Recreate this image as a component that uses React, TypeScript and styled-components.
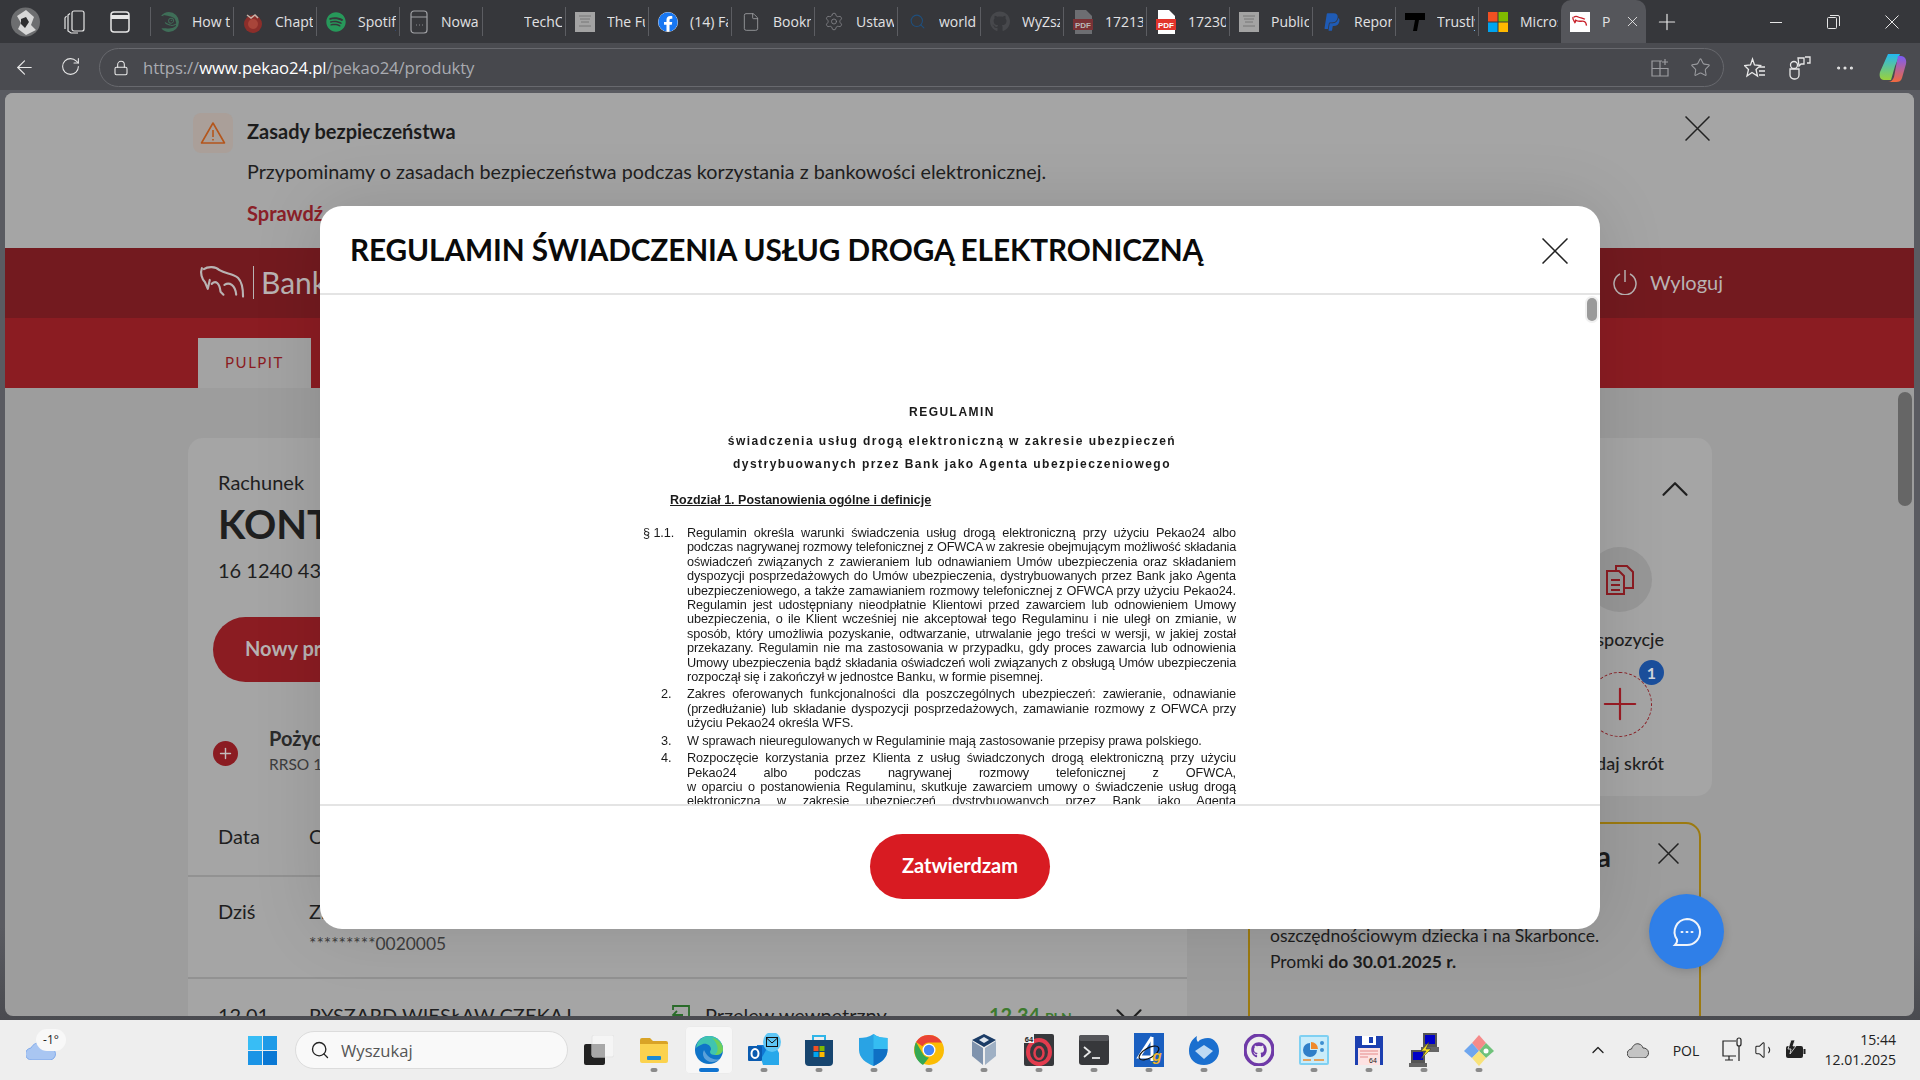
import React from 'react';
import styled, { createGlobalStyle } from 'styled-components';
import {
  ArrowLeft,
  ChevronDown,
  ChevronUp,
  File,
  Lock,
  MoreHorizontal,
  Plus,
  RotateCw,
  Search,
  Settings,
  Star,
  Volume1,
  X,
} from 'lucide-react';
import { FaFacebook, FaGithub, FaPaypal, FaSpotify } from 'react-icons/fa';
import { SiOpensuse } from 'react-icons/si';

const GlobalStyle = createGlobalStyle`
  html, body {
    margin: 0;
    padding: 0;
    width: 1920px;
    height: 1080px;
    overflow: hidden;
    background: #36373b;
    font-family: "Lato", "Liberation Sans", sans-serif;
  }
  * { box-sizing: border-box; }
`;

const Screen = styled.div`
  position: relative;
  width: 1920px;
  height: 1080px;
  display: flex;
  flex-direction: column;
  overflow: hidden;
`;

/* browser chrome */

const TabStrip = styled.div`
  height: 43px;
  flex: none;
  display: flex;
  align-items: stretch;
  background: #36373b;
`;

const StripLead = styled.div`
  flex: 0 0 150px;
  display: flex;
  align-items: center;
  padding-left: 11px;
  gap: 24px;
  color: #e6e6e6;
`;

const Tab = styled.div`
  flex: 0 0 83px;
  display: flex;
  align-items: center;
  gap: 12px;
  padding: 0 3px 0 9px;
  border-left: 1px solid #5c5d62;
  margin: 7px 0;
  overflow: hidden;
`;

const TabThumb = styled.span<{ $color: string }>`
  flex: 0 0 20px;
  width: 20px;
  height: 20px;
  display: flex;
  align-items: center;
  justify-content: center;
  color: ${p => p.$color};
`;

const TabTitle = styled.span`
  font-family: "Open Sans", sans-serif;
  font-size: 14px;
  color: #e2e2e4;
  white-space: nowrap;
  overflow: hidden;
`;

const ActiveTab = styled.div`
  flex: 0 0 85px;
  display: flex;
  align-items: center;
  gap: 12px;
  padding: 0 0 0 9px;
  background: #55565b;
  border-radius: 10px 10px 0 0;
`;

const NewTab = styled.div`
  flex: 0 0 42px;
  display: flex;
  align-items: center;
  justify-content: center;
  color: #e6e6e6;
`;

const WindowButtons = styled.div`
  margin-left: auto;
  display: flex;
  align-items: center;
  padding-right: 21px;
  gap: 45px;
  color: #e6e6e6;
`;

const Toolbar = styled.div`
  height: 47px;
  flex: none;
  display: flex;
  align-items: center;
  background: #4a4b50;
  padding: 2px 0 0 13px;
  color: #e8e8e8;
`;

const ToolButtons = styled.div`
  flex: 0 0 86px;
  display: flex;
  gap: 24px;
`;

const AddressBar = styled.div`
  width: 1625px;
  height: 39px;
  display: flex;
  align-items: center;
  border: 1px solid #68696e;
  border-radius: 20px;
  background: #47484d;
  padding: 0 12px 0 10px;
`;

const LockDisc = styled.span`
  width: 22px;
  height: 22px;
  display: flex;
  align-items: center;
  justify-content: center;
  margin-right: 11px;
  color: #e8e8e8;
`;

const Url = styled.span`
  font-family: "Open Sans", sans-serif;
  font-size: 16.7px;
  color: #a9abb1;
  letter-spacing: -0.1px;
`;

const UrlHost = styled.span`
  color: #ffffff;
`;

const AddressTools = styled.div`
  margin-left: auto;
  display: flex;
  gap: 20px;
  align-items: center;
  color: #9b9ca0;
`;

const ToolbarEnd = styled.div`
  display: flex;
  align-items: center;
  gap: 23px;
  margin-left: 20px;
  color: #e8e8e8;
`;

/* dimmed page */

const Frame = styled.div`
  flex: 1;
  min-height: 0;
  padding: 3px 6px 4px 5px;
  background: linear-gradient(#5a5b61 0, #5a5b61 90%, #4a4b50 100%);
  display: flex;
`;

const Page = styled.div`
  position: relative;
  flex: 1;
  background: #9d9d9d;
  border-radius: 8px;
  overflow: hidden;
  display: flex;
  flex-direction: column;
`;

const Banner = styled.div`
  height: 155px;
  flex: none;
  background: #a5a5a5;
  display: flex;
  padding: 20px 0 0 188px;
  gap: 14px;
`;

const AlertBadge = styled.div`
  flex: 0 0 40px;
  height: 40px;
  border-radius: 8px;
  background: #aa9f99;
  display: flex;
  align-items: center;
  justify-content: center;
`;

const BannerText = styled.div`
  display: flex;
  flex-direction: column;
  width: 1400px;
`;

const BannerTitle = styled.div`
  font-size: 20px;
  line-height: 28px;
  margin-top: 4px;
  font-weight: 700;
  color: #1c1c1c;
`;

const BannerBody = styled.div`
  font-size: 19.76px;
  line-height: 28px;
  margin-top: 12px;
  color: #1f1f1f;
`;

const BannerLink = styled.div`
  font-size: 20px;
  line-height: 28px;
  margin-top: 14px;
  font-weight: 700;
  color: #8b2028;
`;

const BannerClose = styled.div`
  position: absolute;
  left: 1680px;
  top: 23px;
  color: #222;
  display: flex;
`;

const BankHeader = styled.div`
  height: 70px;
  flex: none;
  background: #731a1f;
  display: flex;
  align-items: center;
  padding: 0 191px 2px 193px;
  color: #b9b3b3;
`;

const LogoRule = styled.span`
  width: 1px;
  height: 33px;
  background: #b9b3b3;
  margin: 0 7px 0 8px;
`;

const BankName = styled.span`
  font-size: 30px;
`;

const Logout = styled.div`
  margin-left: auto;
  display: flex;
  align-items: center;
  gap: 12px;
  font-size: 20px;
`;

const MainNav = styled.div`
  height: 70px;
  flex: none;
  background: #8b1c22;
  display: flex;
  align-items: flex-end;
  padding-left: 193px;
`;

const NavTab = styled.div`
  width: 113px;
  height: 50px;
  padding-bottom: 2px;
  background: #a3a3a3;
  color: #8b1c22;
  font-size: 15px;
  letter-spacing: 1.5px;
  display: flex;
  align-items: center;
  justify-content: center;
`;

const PageBody = styled.div`
  flex: 1;
  min-height: 0;
  display: flex;
  padding: 50px 0 0 183px;
  gap: 30px;
`;

const LeftColumn = styled.div`
  flex: 0 0 999px;
  background: #a5a5a5;
  border-radius: 15px 15px 0 0;
  color: #1f1f1f;
`;

const AccountBox = styled.div`
  padding: 30px 30px 0;
`;

const AccountKind = styled.div`
  font-size: 20px;
  line-height: 28px;
`;

const AccountName = styled.div`
  font-size: 40px;
  line-height: 48px;
  margin-top: 4px;
  font-weight: 700;
`;

const AccountNumber = styled.div`
  font-size: 20px;
  line-height: 28px;
  margin-top: 8px;
`;

const PrimaryPill = styled.div`
  width: 220px;
  height: 65px;
  margin: 33px 0 0 -5px;
  border-radius: 33px;
  background: #8b1c22;
  color: #b7b2b2;
  font-size: 20px;
  font-weight: 700;
  display: flex;
  align-items: center;
  padding: 0 0 4px 32px;
`;

const OfferRow = styled.div`
  display: flex;
  align-items: center;
  gap: 31px;
  padding-left: 25px;
  margin-top: 43px;
`;

const OfferDot = styled.span`
  width: 25px;
  height: 25px;
  border-radius: 50%;
  background: #8b1c22;
  color: #c4bcbc;
  display: flex;
  align-items: center;
  justify-content: center;
  margin-top: 6px;
`;

const OfferTitle = styled.div`
  font-size: 20px;
  line-height: 26px;
  font-weight: 700;
  color: #2b2b2b;
`;

const OfferNote = styled.div`
  font-size: 15.5px;
  line-height: 22px;
  margin-top: 2px;
  color: #3d3d3d;
`;

const HistoryRow = styled.div<{ $height: number; $top: number; $gap?: number }>`
  height: ${p => p.$height}px;
  margin-top: ${p => p.$gap ?? 0}px;
  padding: ${p => p.$top}px 0 0 30px;
  display: grid;
  grid-template-columns: 91px 360px 320px 122px 60px;
  border-bottom: 2px solid #929292;
  align-items: start;
  font-size: 20px;
  line-height: 28px;
`;

const MaskedIban = styled.div`
  font-size: 17.4px;
  line-height: 24px;
  margin-top: 7px;
  color: #3e3e3e;
`;

const Transfer = styled.div`
  display: flex;
  align-items: center;
  gap: 12px;
  font-size: 20px;
`;

const Amount = styled.div`
  color: #3d7a2e;
  font-weight: 700;
  font-size: 20px;
`;

const AmountUnit = styled.span`
  font-size: 14px;
`;

const RowToggle = styled.div`
  display: flex;
  margin: -8px 0 0 -5px;
`;

const RightColumn = styled.div`
  flex: 0 0 495px;
  display: flex;
  flex-direction: column;
  gap: 26px;
`;

const ShortcutCard = styled.div`
  height: 358px;
  flex: none;
  background: #a5a5a5;
  border-radius: 15px;
  display: flex;
  flex-direction: column;
  align-items: flex-end;
  padding: 28px 48px 0 0;
  color: #1f1f1f;
`;

const Collapse = styled.div`
  display: flex;
  margin-right: -34px;
  color: #1f1f1f;
`;

const ShortcutIcon = styled.div`
  width: 65px;
  height: 65px;
  border-radius: 50%;
  background: #979797;
  margin: 35px 12px 0 0;
  display: flex;
  align-items: center;
  justify-content: center;
  color: #8b1c22;
`;

const ShortcutLabel = styled.div`
  font-size: 18px;
  line-height: 24px;
  font-weight: 500;
  margin-top: 14.5px;
`;

const AddShortcut = styled.div`
  position: relative;
  width: 65px;
  height: 65px;
  margin: 21px 12px 0 0;
  border: 1px dashed #8b1c22;
  border-radius: 50%;
  display: flex;
  align-items: center;
  justify-content: center;
  color: #9b1c25;
`;

const CountBadge = styled.span`
  position: absolute;
  right: -13px;
  top: -13px;
  width: 25px;
  height: 25px;
  border-radius: 50%;
  background: #1b4f9c;
  color: #d0d4dc;
  font-size: 16px;
  font-weight: 700;
  display: flex;
  align-items: center;
  justify-content: center;
`;

const PromoCard = styled.div`
  width: 453px;
  margin-left: 31px;
  height: 300px;
  flex: none;
  border: 2px solid #9c7a10;
  border-radius: 15px 15px 0 0;
  padding: 0 20px;
  color: #1c1c1c;
`;

const PromoHead = styled.div`
  display: flex;
  align-items: center;
  height: 63px;
`;

const PromoTitle = styled.div`
  width: 344px;
  text-align: right;
  font-size: 28px;
  font-weight: 700;
  white-space: nowrap;
`;

const PromoClose = styled.div`
  margin: -4px 0 0 47px;
  display: flex;
  color: #222;
`;

const PromoText = styled.div`
  font-size: 17.5px;
  line-height: 26px;
  margin-top: 36px;
`;

const ChatBubble = styled.div`
  position: absolute;
  left: 1644px;
  top: 801px;
  width: 75px;
  height: 75px;
  border-radius: 50%;
  background: #2f7fe8;
  box-shadow: 0 2px 10px rgba(0, 0, 0, 0.15);
  display: flex;
  align-items: center;
  justify-content: center;
`;

const PageScrollbar = styled.div`
  position: absolute;
  right: 2px;
  top: 299px;
  width: 14px;
  height: 114px;
  border-radius: 7px;
  background: #666666;
`;

/* modal */

const Modal = styled.div`
  position: absolute;
  left: 320px;
  top: 206px;
  width: 1280px;
  height: 723px;
  background: #ffffff;
  border-radius: 22px;
  box-shadow: 0 0 70px rgba(0, 0, 0, 0.12);
  display: flex;
  flex-direction: column;
  overflow: hidden;
`;

const ModalHeader = styled.div`
  height: 89px;
  flex: none;
  border-bottom: 2px solid #e4e4e4;
  display: flex;
  align-items: center;
  justify-content: space-between;
  padding: 0 32px 1px 30px;
`;

const ModalTitle = styled.h2`
  margin: 0;
  font-size: 29.75px;
  font-weight: 700;
  color: #0a0a0a;
  letter-spacing: -0.1px;
`;

const ModalClose = styled.div`
  display: flex;
  color: #222;
  margin-top: 3px;
`;

const ModalBody = styled.div`
  position: relative;
  flex: 1;
  min-height: 0;
  overflow: hidden;
`;

const ModalThumb = styled.div`
  position: absolute;
  right: 3px;
  top: 3px;
  width: 10px;
  height: 23px;
  border-radius: 5px;
  background: #9a9a9a;
  box-shadow: 0 0 0 2px #f0f0f0;
`;

const Doc = styled.div`
  width: 593px;
  margin-left: 323px;
  padding-top: 106px;
  font-family: "Liberation Sans", Arial, sans-serif;
  color: #1a1a1a;
  filter: blur(0.35px);
`;

const DocTitle = styled.div<{ $top?: number }>`
  margin: ${p => p.$top ?? 0}px 0 0 25px;
  width: 568px;
  text-align: center;
  font-size: 12px;
  font-weight: 700;
  line-height: 22px;
  letter-spacing: 1.47px;
`;

const DocChapter = styled.div`
  margin: 18px 0 19px 27px;
  font-size: 12.5px;
  font-weight: 700;
  line-height: 14px;
  text-decoration: underline;
`;

const DocItem = styled.div`
  display: grid;
  grid-template-columns: 44px 549px;
  margin-bottom: 3px;
  font-size: 12.7px;
  letter-spacing: -0.1px;
  line-height: 14.4px;
`;

const DocMark = styled.div<{ $indent: number }>`
  padding-left: ${p => p.$indent}px;
`;

const DocLine = styled.div<{ $last?: boolean; $tight?: boolean }>`
  text-align: justify;
  text-align-last: ${p => (p.$last ? 'left' : 'justify')};
  white-space: nowrap;
  ${p => p.$tight && 'letter-spacing: -0.2px;'}
`;

const ModalFooter = styled.div`
  height: 125px;
  flex: none;
  border-top: 2px solid #e4e4e4;
  display: flex;
  align-items: flex-start;
  justify-content: center;
  padding-top: 28px;
`;

const ConfirmButton = styled.button`
  width: 180px;
  height: 65px;
  padding: 0 0 4px;
  border: 0;
  border-radius: 33px;
  background: #d81b22;
  color: #ffffff;
  font-family: "Lato", sans-serif;
  font-size: 20px;
  font-weight: 700;
`;

/* taskbar */

const Taskbar = styled.div`
  height: 60px;
  flex: none;
  background: #eeeeee;
  display: flex;
  align-items: center;
`;

const Weather = styled.div`
  position: relative;
  flex: 0 0 248px;
  height: 60px;
  padding: 22px 0 0 26px;
`;

const TempBubble = styled.span`
  position: absolute;
  left: 36px;
  top: 9px;
  width: 30px;
  height: 22px;
  border-radius: 11px;
  background: #f8f8f8;
  font-family: "Open Sans", sans-serif;
  font-size: 12px;
  line-height: 22px;
  text-align: center;
  color: #222;
`;

const SearchBox = styled.div`
  width: 273px;
  height: 38px;
  margin-left: 18px;
  border: 1px solid #dcdcdc;
  border-radius: 19px;
  background: #f9f9f9;
  display: flex;
  align-items: center;
  gap: 11px;
  padding-left: 14px;
  font-family: "Open Sans", sans-serif;
  font-size: 16.6px;
  color: #555;
`;

const Pinned = styled.div`
  display: flex;
  margin-left: 3px;
`;

const PinnedApp = styled.div<{ $active?: boolean }>`
  position: relative;
  width: 55px;
  height: 48px;
  display: flex;
  align-items: center;
  justify-content: center;
  border-radius: 5px;
  ${p => p.$active && 'background: #f7f7f7; box-shadow: inset 0 0 0 1px #ebebeb; margin: 0 3.5px; width: 48px;'}
`;

const RunDot = styled.span<{ $active?: boolean }>`
  position: absolute;
  bottom: 2px;
  left: 50%;
  transform: translateX(-50%);
  width: ${p => (p.$active ? 20 : 7)}px;
  height: 4px;
  border-radius: 2px;
  background: ${p => (p.$active ? '#0f73d0' : '#8a8a8a')};
`;

const Tray = styled.div`
  margin-left: auto;
  display: flex;
  align-items: center;
  padding-right: 24px;
  color: #222;
`;

const TraySlot = styled.span<{ $width: number }>`
  width: ${p => p.$width}px;
  display: flex;
  align-items: center;
  justify-content: center;
  font-family: "Open Sans", sans-serif;
  font-size: 14px;
`;

const Clock = styled.div`
  width: 84px;
  text-align: right;
  font-family: "Open Sans", sans-serif;
  font-size: 14px;
  line-height: 20px;
  color: #222;
`;

/* drawings */

const Cross = ({ size }: { size: number }) => (
  <svg width={size} height={size} viewBox={`0 0 ${size} ${size}`} fill="none" stroke="currentColor" strokeWidth="1.5">
    <path d={`M.5 .5L${size - 0.5} ${size - 0.5}M${size - 0.5} .5L.5 ${size - 0.5}`} />
  </svg>
);

const Bison = ({ color, size }: { color: string; size: number }) => (
  <svg width={size} height={size * 0.72} viewBox="0 0 48 34" fill="none" stroke={color} strokeWidth="2.2" strokeLinejoin="round" strokeLinecap="round">
    <path d="M4 3C2 8 4 14 7 17l3 7 2-9" />
    <path d="M6 4c4-3 12-3 16 1 6 4 14 3 19 8 4 4 5 11 5 19" />
    <path d="M14 19c4-4 8-1 9 8l3 3M27 20c5-3 11 0 12 10" />
  </svg>
);

const PdfIcon = ({ dim }: { dim?: boolean }) => (
  <svg width="20" height="24" viewBox="0 0 20 24">
    <path d="M2 0h11l6 6v18H2z" fill={dim ? '#6d6e72' : '#fff'} />
    <rect y="9" width="20" height="11" fill={dim ? '#7a3236' : '#e2342b'} />
    <text x="10" y="18" fontFamily="Liberation Sans" fontSize="8" fontWeight="700" fill={dim ? '#b8b8b8' : '#fff'} textAnchor="middle">PDF</text>
  </svg>
);

const Thumb = () => (
  <svg width="20" height="20" viewBox="0 0 20 20">
    <rect width="20" height="20" fill="#a3a3a3" />
    <path d="M4 4h12M5 7h10M6 10h8M4 14h12" stroke="#777" strokeWidth="1" />
  </svg>
);

const tabs: { title: string; color: string; icon: React.ReactNode }[] = [
  { title: 'How to', color: '#3f6e58', icon: <SiOpensuse size={20} /> },
  {
    title: 'Chapter',
    color: '#a33',
    icon: (
      <svg width="20" height="22" viewBox="0 0 20 22">
        <circle cx="10" cy="13" r="9" fill="#8c2e2a" />
        <circle cx="10" cy="13" r="5" fill="#a8453a" />
        <path d="M4 4l4 3 4-3 3 3" stroke="#c9b3a8" strokeWidth="1.5" fill="none" />
      </svg>
    ),
  },
  { title: 'Spotify', color: '#27985a', icon: <FaSpotify size={20} /> },
  {
    title: 'Nowa',
    color: '#a0a1a5',
    icon: (
      <svg width="20" height="24" viewBox="0 0 20 24" fill="none" stroke="currentColor" strokeWidth="1.2">
        <rect x="2" y="1" width="16" height="22" rx="3" />
        <path d="M2 7h16M7 15h.8M10 15h.8M13 15h.8" />
      </svg>
    ),
  },
  { title: 'TechCrunch', color: '#36373b', icon: null },
  { title: 'The Fu', color: '#a3a3a3', icon: <Thumb /> },
  { title: '(14) Fa', color: '#1877f2', icon: <FaFacebook size={20} style={{ background: '#fff', borderRadius: '50%' }} /> },
  { title: 'Bookm', color: '#a0a1a5', icon: <File size={22} strokeWidth={1} /> },
  { title: 'Ustaw', color: '#85868a', icon: <Settings size={21} strokeWidth={1} /> },
  { title: 'world', color: '#1f4f7d', icon: <Search size={17} strokeWidth={1.5} /> },
  { title: 'WyZsz', color: '#47484c', icon: <FaGithub size={21} /> },
  { title: '17213', color: '#fff', icon: <PdfIcon dim /> },
  { title: '17230', color: '#fff', icon: <PdfIcon /> },
  { title: 'Public', color: '#a3a3a3', icon: <Thumb /> },
  { title: 'Repor', color: '#1f5bb5', icon: <FaPaypal size={20} /> },
  {
    title: 'Trustly',
    color: '#000',
    icon: (
      <svg width="20" height="20" viewBox="0 0 20 20">
        <path d="M0 1h20v7h-6l-2 11H8l2-11H0z" fill="#000" />
      </svg>
    ),
  },
  {
    title: 'Micros',
    color: '#fff',
    icon: (
      <svg width="20" height="20" viewBox="0 0 20 20">
        <rect width="9.5" height="9.5" fill="#f25022" />
        <rect x="10.5" width="9.5" height="9.5" fill="#7fba00" />
        <rect y="10.5" width="9.5" height="9.5" fill="#00a4ef" />
        <rect x="10.5" y="10.5" width="9.5" height="9.5" fill="#ffb900" />
      </svg>
    ),
  },
];

const appIcons: React.ReactNode[] = [
  <svg key="files" width="30" height="30" viewBox="0 0 30 30">
    <path d="M1 5a2 2 0 0 1 2-2h8l3 3h13a2 2 0 0 1 2 2v4H1z" fill="#d9a326" />
    <path d="M1 9h28v17a2 2 0 0 1-2 2H3a2 2 0 0 1-2-2z" fill="#fbd24e" />
    <rect x="8" y="21" width="14" height="4" rx="1" fill="#1a8ad4" />
  </svg>,
  <svg key="edge" width="30" height="32" viewBox="0 0 30 32">
    <circle cx="15" cy="16" r="14" fill="#0f74c8" />
    <path d="M2 14C3 5 10 2 15 2c8 0 14 6 14 13 0 5-5 6-8 6-3 0-5-1-5-3 0-1 1-2 1-3 0-3-4-6-8-5-3 1-6 3-7 4z" fill="#3fc4b0" />
    <path d="M18 4c6 1 11 6 11 11 0 5-5 6-8 6l2-3c2-4-1-11-5-14z" fill="#6fd05a" />
    <path d="M10 16c-3 5 1 12 8 12 3 0 6-1 8-3-4 1-9 0-12-3-2-2-3-4-4-6z" fill="#eef6fb" opacity=".35" />
  </svg>,
  <svg key="mail" width="34" height="34" viewBox="0 0 34 34">
    <path d="M10 12h18l4 8v12H16z" fill="#28a8ea" />
    <path d="M10 12h12l-8 14H10z" fill="#0f78d4" />
    <rect x="1" y="13" width="14" height="15" rx="1" fill="#0a5bb0" />
    <ellipse cx="8" cy="20.5" rx="3.5" ry="4.5" fill="none" stroke="#fff" strokeWidth="2" />
    <ellipse cx="25" cy="9" rx="9" ry="10" fill="#5fc6f5" />
    <rect x="19.5" y="4.5" width="11" height="9" fill="none" stroke="#111" strokeWidth="1" />
    <path d="M19.5 5l5.5 5 5.5-5" fill="none" stroke="#111" strokeWidth="1" />
  </svg>,
  <svg key="store" width="30" height="34" viewBox="0 0 30 34">
    <path d="M9 7V3h12v4" fill="none" stroke="#2fb5e8" strokeWidth="2" />
    <path d="M1 7h28v22a4 4 0 0 1-4 4H5a4 4 0 0 1-4-4z" fill="#17456f" />
    <rect x="9.5" y="13" width="5" height="5" fill="#f25022" />
    <rect x="15.5" y="13" width="5" height="5" fill="#7fba00" />
    <rect x="9.5" y="19" width="5" height="5" fill="#00a4ef" />
    <rect x="15.5" y="19" width="5" height="5" fill="#ffb900" />
  </svg>,
  <svg key="shield" width="29" height="32" viewBox="0 0 29 32">
    <path d="M14.5 0c4 3 9 4 14 4v12c0 8-7 13-14 16C7 29 0 24 0 16V4c5 0 10-1 14.5-4z" fill="#29a3e4" />
    <path d="M14.5 0v15H28.500v1c0 8-7 13-14 16z" fill="#0f6fc4" />
    <path d="M14.5 0c4 3 9 4 14 4v11h-14z" fill="#35bdf2" />
  </svg>,
  <svg key="chrome" width="30" height="30" viewBox="0 0 30 30">
    <circle cx="15" cy="15" r="15" fill="#fbbc04" />
    <path d="M15 0a15 15 0 0 1 13 7.500H15a7.500 7.500 0 0 0-6.500 3.800L2 7A15 15 0 0 1 15 0z" fill="#ea4335" />
    <path d="M2 7l6.500 11.300A7.500 7.500 0 0 0 15 22.500L9 30C2 26-2 16 2 7z" fill="#34a853" />
    <circle cx="15" cy="15" r="6.500" fill="#fff" />
    <circle cx="15" cy="15" r="5.200" fill="#4285f4" />
  </svg>,
  <svg key="vbox" width="28" height="34" viewBox="0 0 28 34">
    <path d="M14 1l12 6-12 7L2 7z" fill="#1b3c66" />
    <path d="M2 8l11 7v17L2 23z" fill="#7f93ad" />
    <path d="M26 8l-11 7v17l11-9z" fill="#9fb0c4" />
    <path d="M9 7l5-3 5 3-5 3z" fill="#dfe6ee" />
  </svg>,
  <svg key="red" width="30" height="32" viewBox="0 0 30 32">
    <rect width="30" height="32" rx="2" fill="#37383c" />
    <ellipse cx="15" cy="18" rx="11" ry="12" fill="none" stroke="#e33c4e" strokeWidth="4" />
    <ellipse cx="15" cy="19" rx="4.500" ry="6" fill="none" stroke="#e33c4e" strokeWidth="2.500" />
    <rect width="10" height="9" fill="#eee" />
    <text x="5" y="7.500" fontFamily="Liberation Sans" fontSize="7.500" fontWeight="700" fill="#222" textAnchor="middle">64</text>
  </svg>,
  <svg key="term" width="30" height="30" viewBox="0 0 30 30">
    <rect width="30" height="30" rx="3" fill="#37383b" />
    <rect width="30" height="6" rx="2" fill="#55565a" />
    <path d="M5 12l6 5-6 5" fill="none" stroke="#e8e8e8" strokeWidth="1.800" />
    <path d="M13 23h8" stroke="#e8e8e8" strokeWidth="1.800" />
  </svg>,
  <svg key="app4" width="30" height="34" viewBox="0 0 30 34">
    <rect width="30" height="34" fill="#1a5fc0" />
    <path d="M18 4l-13 20h12" fill="none" stroke="#fff" strokeWidth="3" />
    <path d="M18 4v24" stroke="#fff" strokeWidth="3" />
    <ellipse cx="15" cy="20" rx="11" ry="5" fill="none" stroke="#111" strokeWidth="1.200" transform="rotate(-30 15 20)" />
    <text x="23" y="28" fontFamily="Liberation Sans" fontSize="15" fontWeight="700" fontStyle="italic" fill="#f0b429" textAnchor="middle">g</text>
  </svg>,
  <svg key="bird" width="30" height="32" viewBox="0 0 30 32">
    <path d="M15 31C6 31 0 25 0 17 0 10 3 5 8 2c-1 3 0 5 1 6 2-3 6-4 10-4 6 0 11 6 11 13 0 8-7 14-15 14z" fill="#1a6fcf" />
    <path d="M6 17l9-6 9 6-9 8z" fill="#bcd9f3" />
  </svg>,
  <svg key="gh" width="30" height="32" viewBox="0 0 30 32">
    <ellipse cx="15" cy="16" rx="14" ry="15" fill="none" stroke="#6f3aa8" strokeWidth="3.500" />
    <foreignObject x="7" y="8" width="16" height="16">
      <FaGithub size={16} color="#6f3aa8" />
    </foreignObject>
  </svg>,
  <svg key="chart" width="30" height="30" viewBox="0 0 30 30">
    <rect width="30" height="30" rx="2" fill="#7fd0f2" />
    <rect x="2" y="2" width="26" height="26" fill="#c9ecfa" />
    <path d="M11 8a7 7 0 1 0 7 7h-7z" fill="#2f7fc8" />
    <path d="M12 7a7 7 0 0 1 7 7h-7z" fill="#ef8a2b" />
    <circle cx="23" cy="8" r="2" fill="#3f8fd0" />
    <circle cx="23" cy="15" r="2" fill="#3f8fd0" />
    <path d="M4 25h8M15 25h10" stroke="#ef8a2b" strokeWidth="1.500" />
  </svg>,
  <svg key="floppy" width="28" height="30" viewBox="0 0 28 30">
    <path d="M0 1h28v29H0z" fill="#1c3fb0" />
    <rect x="7" y="1" width="14" height="9" fill="#fff" />
    <rect x="14" y="2" width="4" height="6" fill="#1c3fb0" />
    <rect x="3" y="13" width="22" height="17" fill="#fde2e2" />
    <path d="M5 16h18M5 19h18M5 22h8" stroke="#e58a8a" strokeWidth="1" />
    <text x="18" y="28" fontFamily="Liberation Sans" fontSize="7" fill="#222" textAnchor="middle">64</text>
  </svg>,
  <svg key="putty" width="30" height="36" viewBox="0 0 30 36">
    <rect x="14" y="1" width="14" height="14" fill="#555" />
    <rect x="16" y="3" width="10" height="9" fill="#0000c8" />
    <rect x="12" y="15" width="18" height="5" fill="#666" />
    <rect x="2" y="18" width="14" height="13" fill="#555" />
    <rect x="4" y="20" width="10" height="8" fill="#0000c8" />
    <rect y="31" width="18" height="4" fill="#666" />
    <path d="M20 10l-8 9h5l-5 8 10-10h-5z" fill="#f5e020" stroke="#333" strokeWidth=".5" />
  </svg>,
  <svg key="gitg" width="30" height="32" viewBox="0 0 30 32">
    <path d="M15 1l7 8-7 8-7-8z" fill="#f58a8a" />
    <path d="M22 9l8 8-8 7-7-7z" fill="#6fc27a" />
    <path d="M8 9l7 8-7 7-8-7z" fill="#6fa6ee" />
    <path d="M15 17l7 7-7 8-7-8z" fill="#f8e27a" />
    <circle cx="22" cy="17" r="2.500" fill="#fff" />
  </svg>,
];

const docItems: { mark: string; indent: number; lines: string[]; closed: boolean; tight?: number[] }[] = [
  {
    mark: '§ 1.1.',
    indent: 0,
    closed: true,
    tight: [1, 9],
    lines: [
      'Regulamin określa warunki świadczenia usług drogą elektroniczną przy użyciu Pekao24 albo',
      'podczas nagrywanej rozmowy telefonicznej z OFWCA w zakresie obejmującym możliwość składania',
      'oświadczeń związanych z zawieraniem lub odnawianiem Umów ubezpieczenia oraz składaniem',
      'dyspozycji posprzedażowych do Umów ubezpieczenia, dystrybuowanych przez Bank jako Agenta',
      'ubezpieczeniowego, a także zamawianiem rozmowy telefonicznej z OFWCA przy użyciu Pekao24.',
      'Regulamin jest udostępniany nieodpłatnie Klientowi przed zawarciem lub odnowieniem Umowy',
      'ubezpieczenia, o ile Klient wcześniej nie akceptował tego Regulaminu i nie uległ on zmianie, w',
      'sposób, który umożliwia pozyskanie, odtwarzanie, utrwalanie jego treści w wersji, w jakiej został',
      'przekazany. Regulamin nie ma zastosowania w przypadku, gdy proces zawarcia lub odnowienia',
      'Umowy ubezpieczenia bądź składania oświadczeń woli związanych z obsługą Umów ubezpieczenia',
      'rozpoczął się i zakończył w jednostce Banku, w formie pisemnej.',
    ],
  },
  {
    mark: '2.',
    indent: 18,
    closed: true,
    lines: [
      'Zakres oferowanych funkcjonalności dla poszczególnych ubezpieczeń: zawieranie, odnawianie',
      '(przedłużanie) lub składanie dyspozycji posprzedażowych, zamawianie rozmowy z OFWCA przy',
      'użyciu Pekao24 określa WFS.',
    ],
  },
  {
    mark: '3.',
    indent: 18,
    closed: true,
    lines: ['W sprawach nieuregulowanych w Regulaminie mają zastosowanie przepisy prawa polskiego.'],
  },
  {
    mark: '4.',
    indent: 18,
    closed: false,
    lines: [
      'Rozpoczęcie korzystania przez Klienta z usług świadczonych drogą elektroniczną przy użyciu',
      'Pekao24 albo podczas nagrywanej rozmowy telefonicznej z OFWCA,',
      'w oparciu o postanowienia Regulaminu, skutkuje zawarciem umowy o świadczenie usług drogą',
      'elektroniczną w zakresie ubezpieczeń dystrybuowanych przez Bank jako Agenta',
    ],
  },
];

const App: React.FC = () => (
  <Screen>
    <GlobalStyle />

    <TabStrip>
      <StripLead>
        <svg width="29" height="30" viewBox="0 0 29 30">
          <circle cx="14.500" cy="15" r="14.500" fill="#6d6e70" />
          <path d="M6 9l9-6 8 7-3 8 5 5-10 5-8-6 3-6z" fill="#d7d7d7" />
          <path d="M10 12l5-2 3 5-4 6-4-4z" fill="#2e2e30" />
        </svg>
        <svg width="22" height="24" viewBox="0 0 22 24" fill="none" stroke="currentColor" strokeWidth="1.200">
          <rect x="8" y="1" width="12" height="20" rx="2" />
          <path d="M6 3.500L4 5v16l3 2h7M2.500 6L1 8v11" />
        </svg>
        <svg width="20" height="24" viewBox="0 0 20 24" fill="none" stroke="currentColor" strokeWidth="1.500">
          <rect x="1" y="2" width="18" height="20" rx="3" />
          <path d="M1 7h18" strokeWidth="4" />
        </svg>
      </StripLead>
      {tabs.map(tab => (
        <Tab key={tab.title}>
          <TabThumb $color={tab.color}>{tab.icon}</TabThumb>
          <TabTitle>{tab.title}</TabTitle>
        </Tab>
      ))}
      <ActiveTab>
        <TabThumb $color="#fff">
          <svg width="20" height="20" viewBox="0 0 20 20">
            <rect width="20" height="20" fill="#fff" />
            <g transform="translate(2 4) scale(.33)" fill="none" stroke="#c8202a" strokeWidth="4">
              <path d="M3 3c-1 4 0 8 3 12l3 5c2-2 2-5 2-7l5 2c6 2 14 0 20 1 5 1 7 5 8 13" />
              <path d="M5 4c4-3 10-3 14-1 6 3 14 3 20 7" />
            </g>
          </svg>
        </TabThumb>
        <TabTitle>P</TabTitle>
        <X size={17} strokeWidth={1.2} color="#eee" style={{ marginLeft: 2 }} />
      </ActiveTab>
      <NewTab>
        <Plus size={26} strokeWidth={1.1} />
      </NewTab>
      <WindowButtons>
        <svg width="12" height="12" viewBox="0 0 12 12" stroke="currentColor" fill="none">
          <path d="M0 6.500h12" />
        </svg>
        <svg width="13" height="14" viewBox="0 0 13 14" stroke="currentColor" fill="none">
          <rect x=".5" y="2.500" width="9" height="11" rx="1" />
          <path d="M3 .5h8a1.500 1.500 0 0 1 1.500 1.500v9" />
        </svg>
        <svg width="14" height="14" viewBox="0 0 14 14" stroke="currentColor" fill="none">
          <path d="M.5.5l13 13M13.500.5l-13 13" />
        </svg>
      </WindowButtons>
    </TabStrip>

    <Toolbar>
      <ToolButtons>
        <ArrowLeft size={23} strokeWidth={1.2} />
        <RotateCw size={21} strokeWidth={1.2} />
      </ToolButtons>
      <AddressBar>
        <LockDisc>
          <Lock size={16} strokeWidth={1.6} />
        </LockDisc>
        <Url>
          https://<UrlHost>www.pekao24.pl</UrlHost>/pekao24/produkty
        </Url>
        <AddressTools>
          <svg width="20" height="20" viewBox="0 0 20 20" fill="none" stroke="currentColor" strokeWidth="1.200">
            <path d="M12 3H2v15h16v-8M2 10.500h16M10 3v15M15 1v6M12 4h6" />
          </svg>
          <Star size={21} strokeWidth={1.2} />
        </AddressTools>
      </AddressBar>
      <ToolbarEnd>
        <svg width="22" height="22" viewBox="0 0 22 22" fill="none" stroke="currentColor" strokeWidth="1.300">
          <path d="M8.500 2l2 6 6 .5-4.500 4 1.500 6.500-5.500-3.500-5 3.500 1.500-6.500L0.500 8.500l6-.5zM15 10h6M15 14h6M15 18h6" />
        </svg>
        <svg width="22" height="24" viewBox="0 0 22 24" fill="none" stroke="currentColor" strokeWidth="1.300">
          <circle cx="5" cy="9" r="3.500" />
          <path d="M1 13h9v6a4 4 0 0 1-4 4h-1a4 4 0 0 1-4-4zM9 2h6v6h-3l-2 2zM16 1h5v6h-3" />
        </svg>
        <MoreHorizontal size={22} strokeWidth={1.4} />
        <svg width="28" height="30" viewBox="0 0 28 30">
          <defs>
            <linearGradient id="copA" x1="0" y1="0" x2="0" y2="1">
              <stop offset="0" stopColor="#22b8f2" />
              <stop offset="1" stopColor="#9ad13b" />
            </linearGradient>
            <linearGradient id="copB" x1="0" y1="0" x2="0" y2="1">
              <stop offset="0" stopColor="#7a5cf5" />
              <stop offset="1" stopColor="#f2693d" />
            </linearGradient>
          </defs>
          <path d="M9 1h12l-5 12-4 14H5C1 27 0 23 1 19z" fill="url(#copA)" />
          <path d="M19 3h3c4 0 6 4 5 8l-4 14c-1 3-3 4-6 4H9c3 0 5-2 6-5z" fill="url(#copB)" />
        </svg>
      </ToolbarEnd>
    </Toolbar>

    <Frame>
      <Page>
        <Banner>
          <AlertBadge>
            <svg width="26" height="24" viewBox="0 0 26 24" fill="none" stroke="#b4561c" strokeWidth="1.600" strokeLinejoin="round">
              <path d="M13 2L1.500 22h23z" />
              <path d="M13 9v7M13 18v1.500" />
            </svg>
          </AlertBadge>
          <BannerText>
            <BannerTitle>Zasady bezpieczeństwa</BannerTitle>
            <BannerBody>Przypominamy o zasadach bezpieczeństwa podczas korzystania z bankowości elektronicznej.</BannerBody>
            <BannerLink>Sprawdź</BannerLink>
          </BannerText>
          <BannerClose>
            <Cross size={25} />
          </BannerClose>
        </Banner>

        <BankHeader>
          <Bison color="#b9b3b3" size={47} />
          <LogoRule />
          <BankName>Bank</BankName>
          <Logout>
            <svg width="26" height="26" viewBox="0 0 26 26" fill="none" stroke="currentColor" strokeWidth="1.500">
              <path d="M13 1v12M8 5a11 11 0 1 0 10 0" />
            </svg>
            Wyloguj
          </Logout>
        </BankHeader>

        <MainNav>
          <NavTab>PULPIT</NavTab>
        </MainNav>

        <PageBody>
          <LeftColumn>
            <AccountBox>
              <AccountKind>Rachunek</AccountKind>
              <AccountName>KONTO</AccountName>
              <AccountNumber>16 1240 43</AccountNumber>
              <PrimaryPill>Nowy przelew</PrimaryPill>
            </AccountBox>
            <OfferRow>
              <OfferDot>
                <Plus size={17} strokeWidth={2} />
              </OfferDot>
              <div>
                <OfferTitle>Pożyczka</OfferTitle>
                <OfferNote>RRSO 1</OfferNote>
              </div>
            </OfferRow>
            <HistoryRow $height={78} $top={23} $gap={24}>
              <div>Data</div>
              <div>Opis</div>
            </HistoryRow>
            <HistoryRow $height={102} $top={20}>
              <div>Dziś</div>
              <div>
                Zlecenie
                <MaskedIban>*********0020005</MaskedIban>
              </div>
            </HistoryRow>
            <HistoryRow $height={80} $top={22}>
              <div>12.01</div>
              <div>RYSZARD WIESŁAW CZEKAJ</div>
              <Transfer>
                <svg width="24" height="22" viewBox="0 0 24 22" fill="none" stroke="#2a6b2a" strokeWidth="1.800">
                  <path d="M4 6V2h16v18H4v-4M14 11H4M8 7l-4 4 4 4" />
                </svg>
                Przelew wewnętrzny
              </Transfer>
              <Amount>
                12,34 <AmountUnit>PLN</AmountUnit>
              </Amount>
              <RowToggle>
                <ChevronDown size={46} strokeWidth={1.1} />
              </RowToggle>
            </HistoryRow>
          </LeftColumn>

          <RightColumn>
            <ShortcutCard>
              <Collapse>
                <ChevronUp size={46} strokeWidth={1.15} />
              </Collapse>
              <ShortcutIcon>
                <svg width="30" height="32" viewBox="0 0 30 32" fill="none" stroke="currentColor" strokeWidth="2">
                  <path d="M11 6V2h11l6 6v16h-8" />
                  <path d="M2 7h12l5 5v18H2zM6 16h9M6 21h9M6 26h9" />
                </svg>
              </ShortcutIcon>
              <ShortcutLabel>Dyspozycje</ShortcutLabel>
              <AddShortcut>
                <Plus size={52} strokeWidth={1} />
                <CountBadge>1</CountBadge>
              </AddShortcut>
              <ShortcutLabel>Dodaj skrót</ShortcutLabel>
            </ShortcutCard>

            <PromoCard>
              <PromoHead>
                <PromoTitle>Promocja</PromoTitle>
                <PromoClose>
                  <Cross size={21} />
                </PromoClose>
              </PromoHead>
              <PromoText>
                oszczędnościowym dziecka i na Skarbonce.
                <br />
                Promki <b>do 30.01.2025 r.</b>
              </PromoText>
            </PromoCard>
          </RightColumn>
        </PageBody>

        <ChatBubble>
          <svg width="32" height="32" viewBox="0 0 32 32" fill="none" stroke="#f0f4fa" strokeWidth="2">
            <path d="M16 3a13 13 0 1 1 0 26H4c1-1 2.500-3 2-5.500A13 13 0 0 1 16 3z" />
            <path d="M10.500 16h1M15.500 16h1M20.500 16h1" strokeLinecap="round" />
          </svg>
        </ChatBubble>
        <PageScrollbar />
      </Page>
    </Frame>

    <Taskbar>
      <Weather>
        <svg width="30" height="18" viewBox="0 0 30 18">
          <path d="M6 18a6 6 0 0 1-1-12c2-4 6-6 10-5 3 1 5 3 6 5h2a6 6 0 0 1 1 12z" fill="#a9c6f2" stroke="#6f9ee8" strokeWidth=".8" />
        </svg>
        <TempBubble>-1°</TempBubble>
      </Weather>
      <svg width="29" height="29" viewBox="0 0 29 29">
        <rect width="14" height="14" fill="#38bdf5" />
        <rect x="15" width="14" height="14" fill="#1e9be8" />
        <rect y="15" width="14" height="14" fill="#1a94e6" />
        <rect x="15" y="15" width="14" height="14" fill="#0a78d4" />
      </svg>
      <SearchBox>
        <Search size={20} strokeWidth={1.6} color="#222" />
        Wyszukaj
      </SearchBox>
      <Pinned>
        <PinnedApp>
          <svg width="30" height="30" viewBox="0 0 30 30">
            <rect x="0" y="9" width="21" height="21" rx="2" fill="#222" />
            <rect x="8" y="0" width="22" height="22" rx="2" fill="#f5f5f5" stroke="#e5e5e5" />
            <rect x="8" y="9" width="13" height="13" fill="#a8a8a8" />
          </svg>
        </PinnedApp>
        {appIcons.map((icon, i) => (
          <PinnedApp key={i} $active={i === 1}>
            {icon}
            <RunDot $active={i === 1} />
          </PinnedApp>
        ))}
      </Pinned>
      <Tray>
        <TraySlot $width={40}>
          <ChevronUp size={20} strokeWidth={1.6} />
        </TraySlot>
        <TraySlot $width={40}>
          <svg width="22" height="15" viewBox="0 0 22 15">
            <path d="M5 15a4.500 4.500 0 0 1-.5-9C6 2 9 0 12 1c2 .5 3.500 2 4 4a5 5 0 0 1 1 10z" fill="#c4c4c4" stroke="#444" strokeWidth="1" />
          </svg>
        </TraySlot>
        <TraySlot $width={56}>POL</TraySlot>
        <TraySlot $width={36}>
          <svg width="20" height="26" viewBox="0 0 20 26" fill="none" stroke="#222" strokeWidth="1.200">
            <path d="M14 4H1v15h13M7 19v4M3 23h8" />
            <rect x="15" y="1" width="4" height="8" rx="2" />
            <path d="M17 9v15" />
          </svg>
        </TraySlot>
        <TraySlot $width={30}>
          <Volume1 size={22} strokeWidth={1.1} />
        </TraySlot>
        <TraySlot $width={32}>
          <svg width="22" height="22" viewBox="0 0 22 22">
            <rect x="1" y="7" width="17" height="12" rx="2" fill="#222" />
            <rect x="18.500" y="10" width="2" height="5" fill="#222" />
            <path d="M6 1L3 10h3l-1 5 6-8H8l2-6z" fill="#222" stroke="#eee" strokeWidth=".8" />
          </svg>
        </TraySlot>
        <Clock>
          15:44
          <br />
          12.01.2025
        </Clock>
      </Tray>
    </Taskbar>

    <Modal>
      <ModalHeader>
        <ModalTitle>REGULAMIN ŚWIADCZENIA USŁUG DROGĄ ELEKTRONICZNĄ</ModalTitle>
        <ModalClose>
          <Cross size={26} />
        </ModalClose>
      </ModalHeader>
      <ModalBody>
        <Doc>
          <DocTitle>REGULAMIN</DocTitle>
          <DocTitle $top={7}>świadczenia usług drogą elektroniczną w zakresie ubezpieczeń</DocTitle>
          <DocTitle $top={1}>dystrybuowanych przez Bank jako Agenta ubezpieczeniowego</DocTitle>
          <DocChapter>Rozdział 1. Postanowienia ogólne i definicje</DocChapter>
          {docItems.map(item => (
            <DocItem key={item.mark}>
              <DocMark $indent={item.indent}>{item.mark}</DocMark>
              <div>
                {item.lines.map((line, i) => (
                  <DocLine
                    key={i}
                    $last={item.closed && i === item.lines.length - 1}
                    $tight={item.tight?.includes(i)}
                  >
                    {line}
                  </DocLine>
                ))}
              </div>
            </DocItem>
          ))}
        </Doc>
        <ModalThumb />
      </ModalBody>
      <ModalFooter>
        <ConfirmButton>Zatwierdzam</ConfirmButton>
      </ModalFooter>
    </Modal>
  </Screen>
);

export default App;
